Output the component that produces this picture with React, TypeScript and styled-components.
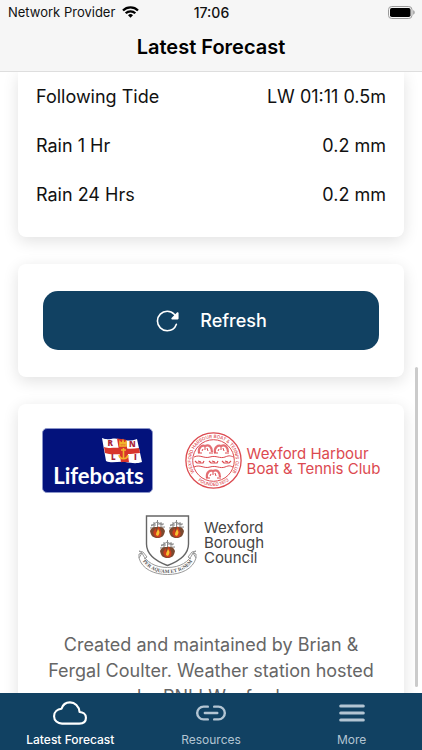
import React from "react";
import styled, { createGlobalStyle } from "styled-components";

const navy = "#114162";

const GlobalStyle = createGlobalStyle`
  *, *::before, *::after { box-sizing: border-box; }
  html, body { margin: 0; background: #fff; }
  body, button { font-family: Inter, "Liberation Sans", sans-serif; }
`;

const Screen = styled.div`
  display: flex;
  flex-direction: column;
  height: 100vh;
  color: #111;
  overflow: hidden;
`;

const Header = styled.header`
  flex: none;
  background: #f6f6f6;
  border-bottom: 1px solid #dedede;
`;

const StatusBar = styled.div`
  display: grid;
  grid-template-columns: 1fr auto 1fr;
  align-items: center;
  height: 24px;
  padding: 0 7px 0 8px;
  font-size: 13px;
`;

const Carrier = styled.div`
  display: flex;
  align-items: center;
  gap: 7px;
  white-space: nowrap;
`;

const Clock = styled.time`
  font-size: 14px;
  font-weight: 500;
`;

const BatterySlot = styled.div`
  display: flex;
  justify-content: flex-end;
`;

const Title = styled.h1`
  margin: 0;
  height: 47px;
  font-size: 20px;
  line-height: 47px;
  font-weight: 600;
  text-align: center;
  color: #000;
`;

const Content = styled.main`
  position: relative;
  flex: 1;
  min-height: 0;
  overflow: hidden;
  display: flex;
  flex-direction: column;
  gap: 27px;
  padding: 0 18px;
`;

const Card = styled.section<{ $continued?: boolean; $pad: string }>`
  flex: none;
  padding: ${(p) => p.$pad};
  background: #fff;
  border-radius: ${(p) => (p.$continued ? "0 0 8px 8px" : "8px")};
  box-shadow: 0 4px 16px rgba(0, 0, 0, 0.12);
`;

const Readings = styled.dl`
  margin: 0;
`;

const Reading = styled.div`
  display: flex;
  justify-content: space-between;
  height: 49px;
  font-size: 18px;
  line-height: 49px;
`;

const Name = styled.dt``;

const Value = styled.dd`
  margin: 0;
`;

const RefreshButton = styled.button`
  display: flex;
  align-items: center;
  justify-content: center;
  gap: 19px;
  width: 100%;
  height: 59px;
  padding: 0;
  border: 0;
  border-radius: 15px;
  background: ${navy};
  color: #fff;
  font-size: 18px;
  font-weight: 500;
`;

const Sponsors = styled.div`
  display: flex;
  flex-wrap: wrap;
  justify-content: center;
  align-items: center;
  gap: 22px 32px;
`;

const Lifeboats = styled.div`
  display: grid;
  justify-items: end;
  align-content: space-between;
  width: 111px;
  height: 65px;
  padding: 8px 8px 4px;
  border: 1px solid #8a94c8;
  border-radius: 5px;
  background: #03127c;
  color: #fff;
  font-family: Lato, sans-serif;
  font-size: 22px;
  line-height: 24px;
  font-weight: 700;
`;

const Partner = styled.div<{ $color: string; $gap: number; $trail?: number }>`
  display: flex;
  align-items: center;
  gap: ${(p) => p.$gap}px;
  padding-right: ${(p) => p.$trail ?? 0}px;
  color: ${(p) => p.$color};
  font-size: 15px;
  line-height: 15px;
  white-space: nowrap;
`;

const PartnerName = styled.span<{ $raised?: boolean }>`
  padding-bottom: ${(p) => (p.$raised ? "6px" : "0")};
`;

const Credit = styled.p`
  margin: 56px 0 0;
  color: #666;
  font-size: 18px;
  line-height: 26px;
  text-align: center;
`;

const ScrollThumb = styled.div`
  position: absolute;
  top: 295px;
  right: 4px;
  bottom: 6px;
  width: 3px;
  border-radius: 2px;
  background: #cbcbcb;
`;

const TabBar = styled.nav`
  flex: none;
  display: grid;
  grid-template-columns: repeat(3, 1fr);
  height: 57px;
  background: ${navy};
`;

const Tab = styled.a<{ $active?: boolean }>`
  display: flex;
  flex-direction: column;
  align-items: center;
  gap: 3px;
  padding-top: 3px;
  color: ${(p) => (p.$active ? "#fff" : "#b3c5d3")};
  font-size: 12px;
  line-height: 14px;
  font-weight: ${(p) => (p.$active ? 500 : 400)};
  text-decoration: none;
`;

const WifiIcon = () => (
  <svg width="17" height="12" viewBox="0 0 17 12" fill="none" stroke="#000" strokeWidth="2.3" aria-hidden="true">
    <path d="M1 4.5a10.7 10.7 0 0 1 15 0" />
    <path d="M3.7 7.3a6.8 6.8 0 0 1 9.6 0" />
    <path d="M8.5 11.8 6 9.3a3.5 3.5 0 0 1 5 0z" fill="#000" stroke="none" />
  </svg>
);

const BatteryIcon = () => (
  <svg width="27" height="13" viewBox="0 0 27 13" aria-hidden="true">
    <rect x="0.5" y="0.5" width="23.5" height="12" rx="3.2" fill="none" stroke="#9b9b9b" />
    <rect x="2" y="2" width="20.5" height="9" rx="1.8" fill="#000" />
    <path d="M25.2 4.3c2 .6 2 3.8 0 4.4z" fill="#9b9b9b" />
  </svg>
);

const ReloadIcon = () => (
  <svg width="26" height="26" viewBox="0 0 512 512" aria-hidden="true">
    <path
      d="M400 148l-21.12-24.57A191.43 191.43 0 0 0 240 64C134 64 48 150 48 256s86 192 192 192a192.09 192.09 0 0 0 181.07-128"
      fill="none"
      stroke="currentColor"
      strokeWidth="32"
      strokeLinecap="round"
      strokeMiterlimit="10"
    />
    <path
      d="M464 97.42V208a16 16 0 0 1-16 16H337.42c-14.26 0-21.4-17.23-11.32-27.31L436.69 86.1C446.77 76 464 83.16 464 97.42z"
      fill="currentColor"
    />
  </svg>
);

const CloudIcon = () => (
  <svg width="34" height="34" viewBox="0 0 512 512" fill="none" stroke="currentColor" strokeWidth="32" strokeLinejoin="round" aria-hidden="true">
    <path d="M400 240c-8.89-89.54-71-144-144-144-69 0-113.44 48.2-128 96-60 6-112 43.59-112 112 0 66 54 112 120 112h260c55 0 100-27.44 100-88 0-59.82-53-85.76-96-88z" />
  </svg>
);

const LinkIcon = () => (
  <svg width="34" height="34" viewBox="0 0 512 512" fill="none" stroke="currentColor" strokeWidth="36" strokeLinecap="round" strokeLinejoin="round" aria-hidden="true">
    <path d="M208 352h-64a96 96 0 0 1 0-192h64M304 160h64a96 96 0 0 1 0 192h-64M163.29 256h187.42" />
  </svg>
);

const MenuIcon = () => (
  <svg width="34" height="34" viewBox="0 0 512 512" fill="none" stroke="currentColor" strokeWidth="46" strokeLinecap="round" aria-hidden="true">
    <path d="M86 152h340M86 256h340M86 360h340" />
  </svg>
);

const LifeboatFlag = () => (
  <svg width="43" height="27" viewBox="0 0 43 27" aria-hidden="true">
    <path d="M1 1c7 3 10-1 17 1s12 2 18 0l5 23c-6 2-10 1-17 0s-13 2-19-1z" fill="#fff" />
    <path d="M3 10c6 2 10 0 16 1s13 1 19 0l1 5c-6 1-13 1-18 1s-12 1-17-1z" fill="#d8352c" />
    <path d="M16 1.500c3 .3 5 .6 9 1.200l3 22.600c-3-.2-5-.5-8-.1z" fill="#d8352c" />
    <g fill="none" stroke="#f2b62c" strokeWidth="1.600">
      <path d="M19 9V5l2 2 1-3 1 3 2-2v4zM22.500 11v11M20 13h5M18 18c1 5 8 5 9 0" />
    </g>
    <g fill="#a8253a" fontFamily="Open Sans, sans-serif" fontSize="8" fontWeight="800">
      <text x="6.500" y="9">R</text>
      <text x="28" y="9.500">N</text>
      <text x="10" y="23">L</text>
      <text x="33" y="23">I</text>
    </g>
  </svg>
);

const Boat = ({ x, y }: { x: number; y: number }) => (
  <g transform={`translate(${x} ${y})`}>
    <path d="M1 9C0 3 4 1 7 2c4-2 7 1 7 6" strokeWidth="2.200" strokeOpacity="0.800" />
    <path d="M0 9h4M11 9h4M4 7l1-2M7 6V3M10 7 9 4" strokeWidth="1" />
  </g>
);

const ClubSeal = () => (
  <svg width="57" height="57" viewBox="0 0 57 57" fill="none" stroke="#dc4a50" aria-hidden="true">
    <defs>
      <path id="sealTop" d="M10.500 41.500A22.300 22.300 0 1 1 46.500 41.500" />
      <path id="sealBottom" d="M14 49.500A25.600 25.600 0 0 0 43 49.500" />
    </defs>
    <circle cx="28.500" cy="28.500" r="27.600" strokeWidth="1.300" />
    <circle cx="28.500" cy="28.500" r="20.800" strokeWidth="1" />
    <path d="M9 25c6-3 10 2 16 0s10 2 15 0 5-1 9 0M9 35c6-3 10 2 16 0s10 2 15 0 5-1 8 0" />
    <path d="M10 29l2 2h6l1-2m-6 0 3 1m8-1 2 2h6l1-2m-6 0 3 1m7-1 2 2h5l2-2m-6 0 3 1" strokeWidth="1.200" />
    <Boat x={13} y={12} />
    <Boat x={29} y={12} />
    <Boat x={21} y={37} />
    <g fill="#dc4a50" stroke="none" fontFamily="Inter, sans-serif" fontSize="4.500" fontWeight="500">
      <text><textPath href="#sealTop" startOffset="50%" textAnchor="middle">WEXFORD HARBOUR BOAT &amp; TENNIS CLUB</textPath></text>
      <text><textPath href="#sealBottom" startOffset="50%" textAnchor="middle">FOUNDED 1873</textPath></text>
    </g>
  </svg>
);

const Galley = ({ x, y }: { x: number; y: number }) => (
  <g transform={`translate(${x} ${y})`}>
    <path d="M1 4h5M8 3h6M4 1v8M11 1v8M7.500 -1v8M0 7l15-1M1 5l6-4 6 3" stroke="#888" strokeWidth="1" fill="none" />
    <path d="M1 8c2-2 4-2 6.500-2S13 6 14 8l1 2c-1 5-3 7-7.500 7S1 15 0 10z" fill="#7a4a30" />
    <path d="M4 14c-2-4 1-4 1-7 2 2 1 3 2 4 1-2 0-4 2-6 0 4 4 5 2 10-2 2-5 2-7-1z" fill="#cf3d1e" />
    <path d="M6 14c0-3 1-3 2-6 2 3 2 4 0 7z" fill="#f6c231" />
  </g>
);

const CouncilCrest = () => (
  <svg width="60" height="61" viewBox="0 0 60 61" aria-hidden="true">
    <path d="M8.500 1h42v28c0 11-9 17-21 21.500C17.500 46 8.500 40 8.500 29z" fill="#fff" stroke="#666" strokeWidth="1.400" />
    <Galley x={12} y={6} />
    <Galley x={31} y={6} />
    <Galley x={22} y={26} />
    <path d="M4 38c4 9 13 14.500 25.500 14.500S51 47 55 38l3 5c-3 11-15 16.500-28.500 16.500S4 54 1 43z" fill="#fff" stroke="#999" />
    <path d="M4 38 1 36l4 1 4 5-3 2M55 38l3-2-4 1-4 5 3 2M1 43l0-4 3-1M58 43l0-4-3-1" fill="none" stroke="#999" />
    <path id="crestMotto" d="M4 45C9 53 18 58 29.500 58S51 53 55 45" fill="none" />
    <text fill="#555" fontFamily="Liberation Serif, serif" fontSize="5" fontWeight="700">
      <textPath href="#crestMotto" startOffset="50%" textAnchor="middle">PER AQUAM ET IGNEM</textPath>
    </text>
  </svg>
);

const readings = [
  ["Following Tide", "LW 01:11 0.5m"],
  ["Rain 1 Hr", "0.2 mm"],
  ["Rain 24 Hrs", "0.2 mm"],
];

export default function App() {
  return (
    <Screen>
      <GlobalStyle />
      <Header>
        <StatusBar>
          <Carrier>Network Provider <WifiIcon /></Carrier>
          <Clock>17:06</Clock>
          <BatterySlot><BatteryIcon /></BatterySlot>
        </StatusBar>
        <Title>Latest Forecast</Title>
      </Header>
      <Content>
        <Card $continued $pad="0 18px 18px">
          <Readings>
            {readings.map(([name, value]) => (
              <Reading key={name}>
                <Name>{name}</Name>
                <Value>{value}</Value>
              </Reading>
            ))}
          </Readings>
        </Card>
        <Card $pad="27px 25px">
          <RefreshButton type="button"><ReloadIcon />Refresh</RefreshButton>
        </Card>
        <Card $pad="24px 22px">
          <Sponsors>
            <Lifeboats><LifeboatFlag />Lifeboats</Lifeboats>
            <Partner $color="#dc4a50" $gap={5}>
              <ClubSeal />
              <PartnerName>Wexford Harbour<br />Boat &amp; Tennis Club</PartnerName>
            </Partner>
            <Partner $color="#444" $gap={6} $trail={20}>
              <CouncilCrest />
              <PartnerName $raised>Wexford<br />Borough<br />Council</PartnerName>
            </Partner>
          </Sponsors>
          <Credit>Created and maintained by Brian &amp; Fergal Coulter. Weather station hosted by RNLI Wexford.</Credit>
        </Card>
        <ScrollThumb />
      </Content>
      <TabBar>
        <Tab href="#forecast" $active aria-current="page"><CloudIcon />Latest Forecast</Tab>
        <Tab href="#resources"><LinkIcon />Resources</Tab>
        <Tab href="#more"><MenuIcon />More</Tab>
      </TabBar>
    </Screen>
  );
}
